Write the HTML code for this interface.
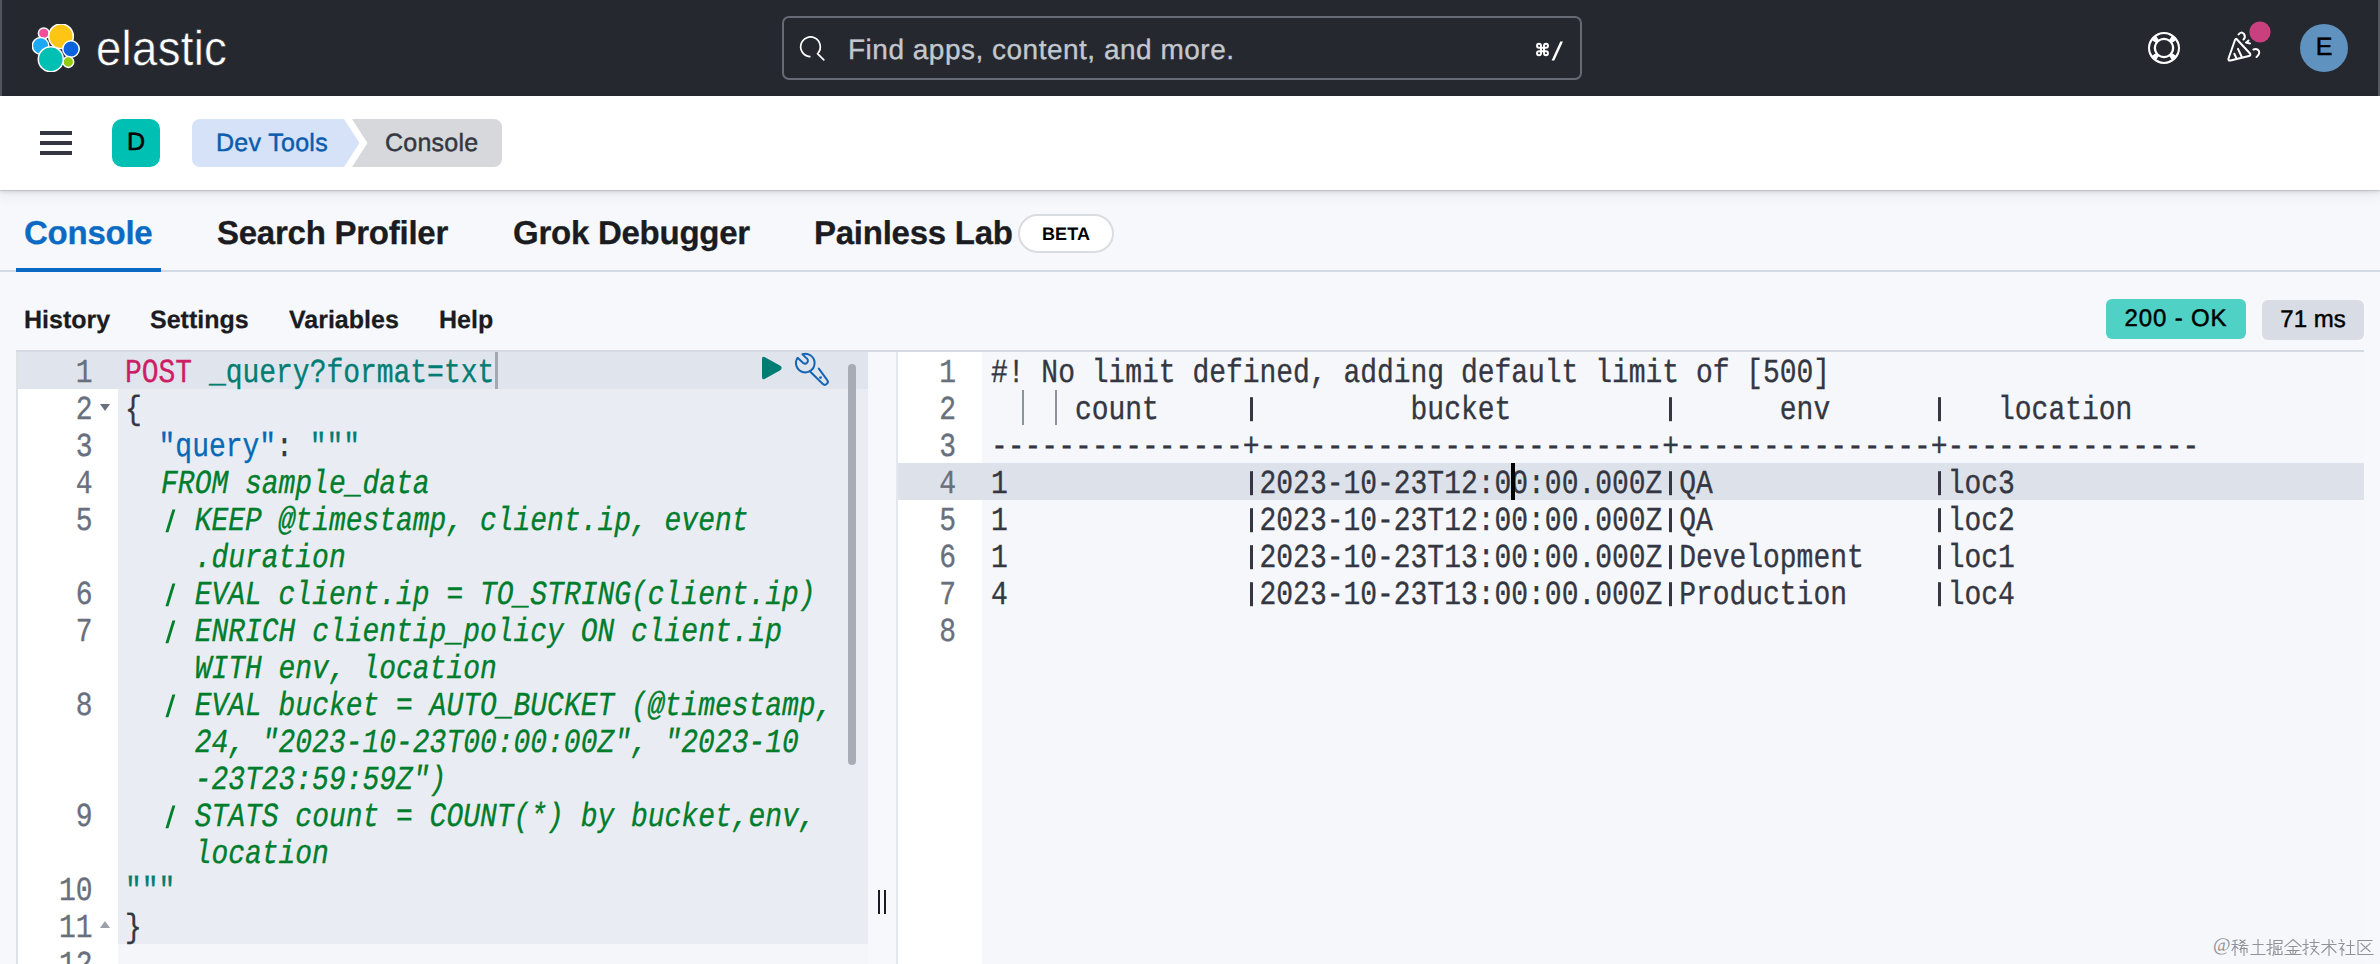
<!DOCTYPE html>
<html><head><meta charset="utf-8">
<style>
*{margin:0;padding:0;box-sizing:border-box}
html,body{text-rendering:geometricPrecision;width:2380px;height:964px;overflow:hidden;background:#f7f8fc;font-family:"Liberation Sans",sans-serif;position:relative}
.abs{position:absolute}
#hdr{left:0;top:0;width:2380px;height:96px;background:#25282f}
#bc{left:0;top:96px;width:2380px;height:94px;background:#fff;box-shadow:0 1px 1px rgba(40,40,70,.14),0 3px 3px rgba(40,40,60,.08),0 6px 12px rgba(40,40,60,.07)}
.tab{top:214px;letter-spacing:-0.25px;font-size:33px;font-weight:bold;color:#1a1c21;white-space:nowrap;-webkit-text-stroke:0.3px currentColor}
.tb{top:306px;font-size:25px;font-weight:bold;color:#1a1c21;white-space:nowrap;-webkit-text-stroke:0.25px currentColor}
.mono{font-family:"Liberation Mono",monospace;font-size:28px;white-space:pre;letter-spacing:-0.02px;-webkit-text-stroke:0.3px currentColor}
.ln{position:absolute;height:37px;line-height:37px;margin-top:4.5px;transform:scaleY(1.2);transform-origin:0 26px}
.gn{left:18px;width:74.5px;text-align:right;color:#69707d}
.rn{left:898px;width:58px;text-align:right;color:#69707d}
.lc{left:125px;color:#343741}
.rc{left:991px;color:#343741}
.m{color:#cc1d65}.u{color:#017d73}.p{color:#343741}.k{color:#0769b5}.q{color:#017d73}.g{color:#007d2c;font-style:italic;position:relative;left:2.5px}
.pp,.pi{position:relative;color:transparent}
.pp::after{content:"";position:absolute;left:7px;top:4.4px;width:3px;height:19.4px;background:#343741}
.pi::after{content:"";position:absolute;left:8px;top:4.8px;width:2.6px;height:18.5px;background:#00802b;transform:skewX(-20deg)}
</style></head><body>
<!-- HEADER -->
<div id="hdr" class="abs"></div>
<div class="abs" style="left:0;top:0;width:2px;height:96px;background:#50545c"></div>
<div class="abs" style="left:2378px;top:0;width:2px;height:96px;background:#55585f"></div>
<!-- logo -->
<svg class="abs" style="left:32px;top:24px" width="48" height="48" viewBox="32 24 48 48">
<g stroke="#fff" stroke-width="1.5">
<circle cx="43.8" cy="33.3" r="5.4" fill="#f04e98"/>
<circle cx="61" cy="36.3" r="12.3" fill="#fec514"/>
<circle cx="40.6" cy="45.8" r="8.3" fill="#1ba9f5"/>
<circle cx="71" cy="49" r="8.2" fill="#0b64dd"/>
<circle cx="68.3" cy="62" r="5.4" fill="#93c90e"/>
<circle cx="50.8" cy="59.2" r="12.5" fill="#00bfb3"/>
</g></svg>
<div class="abs" style="left:96px;top:17px;font-size:49px;color:#fff;line-height:64px;transform:scaleX(0.93);transform-origin:0 0;-webkit-text-stroke:0.5px #25282f;letter-spacing:0.3px">elastic</div>
<!-- search -->
<div class="abs" style="left:782px;top:16px;width:800px;height:64px;border:2px solid #666a73;border-radius:7px"></div>
<div class="abs" style="left:848px;top:32px;font-size:28px;color:#c3c7ce;line-height:36px;letter-spacing:0.5px;-webkit-text-stroke:0.35px currentColor">Find apps, content, and more.</div>
<svg class="abs" style="left:1530px;top:38px" width="36" height="26" viewBox="1530 38 36 26"><g fill="none" stroke="#fff" stroke-width="1.9">
<path d="M1541 47.8 H1544 V51.2 H1541 Z"/>
<path d="M1541 47.8 V45.8 A2 2 0 1 0 1539 47.8 H1541"/>
<path d="M1544 47.8 V45.8 A2 2 0 1 1 1546 47.8 H1544"/>
<path d="M1541 51.2 V53.2 A2 2 0 1 1 1539 51.2 H1541"/>
<path d="M1544 51.2 V53.2 A2 2 0 1 0 1546 51.2 H1544"/>
</g><path d="M1560.3 41.5 H1563 L1554.3 60.5 H1551.6 Z" fill="#fff"/></svg>

<svg class="abs" style="left:780px;top:14px" width="80" height="68" viewBox="780 14 80 68">
<path d="M818.0 53.1 A9.8 9.8 0 1 0 810.5 56.6" fill="none" stroke="#fff" stroke-width="1.7"/>
<path d="M817.5 53.6 L823.8 59.8" stroke="#fff" stroke-width="1.7" stroke-linecap="round"/>
</svg>
<svg class="abs" style="left:2140px;top:16px" width="140" height="60" viewBox="2140 16 140 60">
<circle cx="2164" cy="48" r="12" fill="none" stroke="#fff" stroke-width="8"/>
<g fill="none" stroke="#25282f" stroke-width="3.7">
<path d="M2157.46 37.94 A12 12 0 0 1 2170.54 37.94"/>
<path d="M2174.06 41.46 A12 12 0 0 1 2174.06 54.54"/>
<path d="M2170.54 58.06 A12 12 0 0 1 2157.46 58.06"/>
<path d="M2153.94 54.54 A12 12 0 0 1 2153.94 41.46"/>
</g>
<g fill="none" stroke="#fff" stroke-width="2" stroke-linecap="round" stroke-linejoin="round">
<path d="M2237 39.5 Q2236 38 2235 40 L2228.5 58.5 Q2228 61 2230.5 60.5 L2249 56 Q2251 55.5 2250 53.5 Z"/>
<path d="M2234.3 53.8 L2236.6 58.6 M2238 48.8 L2241.8 57"/>
<path d="M2238.5 34.5 Q2241 31 2244 34 Q2246 37 2243.5 39.5"/>
<path d="M2253.5 49.5 Q2257 48 2259 51 Q2260 54 2256.5 57"/>
<path d="M2246 42.5 L2250 43.5 M2247 42 L2248.5 40.5"/>
</g>
<circle cx="2260" cy="32" r="10.6" fill="#c9407f"/>
</svg>
<div class="abs" style="left:2300px;top:24px;width:48px;height:48px;border-radius:24px;background:#6092c0;color:#000;font-size:25px;text-align:center;line-height:46px;-webkit-text-stroke:0.5px #000">E</div>
<!-- BREADCRUMB BAR -->
<div id="bc" class="abs"></div>
<div class="abs" style="left:40px;top:131px;width:32px;height:4px;background:#343741"></div>
<div class="abs" style="left:40px;top:141px;width:32px;height:4px;background:#343741"></div>
<div class="abs" style="left:40px;top:151px;width:32px;height:4px;background:#343741"></div>
<div class="abs" style="left:112px;top:119px;width:48px;height:48px;background:#00bfb3;border-radius:10px;color:#000;font-size:25px;text-align:center;line-height:47px;-webkit-text-stroke:0.6px #000">D</div>

<svg class="abs" style="left:180px;top:105px" width="340" height="75" viewBox="180 105 340 75">
<path d="M200 119 H344 L359.5 143 L344 167 H200 A8 8 0 0 1 192 159 V127 A8 8 0 0 1 200 119 Z" fill="#d6e2f7"/>
<path d="M352 119 H494 A8 8 0 0 1 502 127 V159 A8 8 0 0 1 494 167 H352 L367.5 143 Z" fill="#d6d8dc"/>
</svg>
<div class="abs" style="left:216px;top:127px;font-size:25px;color:#0b5cad;line-height:32px;letter-spacing:0.3px;-webkit-text-stroke:0.45px currentColor">Dev Tools</div>
<div class="abs" style="left:385px;top:127px;font-size:25px;color:#343741;line-height:32px;letter-spacing:0.25px;-webkit-text-stroke:0.45px currentColor">Console</div>
<!-- TABS -->
<div class="abs tab" style="left:24px;color:#0b6bc4">Console</div>
<div class="abs tab" style="left:217px">Search Profiler</div>
<div class="abs tab" style="left:513px">Grok Debugger</div>
<div class="abs tab" style="left:814px">Painless Lab</div>
<div class="abs" style="left:0;top:270px;width:2380px;height:2px;background:#d3dae6"></div>
<div class="abs" style="left:16px;top:268px;width:145px;height:4px;background:#0b6bc4"></div>

<div class="abs" style="left:1018px;top:214px;width:96px;height:39px;border:2px solid #d9dce1;background:#fff;border-radius:20px;font-size:18px;font-weight:bold;color:#000;text-align:center;line-height:37px;letter-spacing:0.1px">BETA</div>
<!-- TOOLBAR -->
<div class="abs tb" style="left:24px">History</div>
<div class="abs tb" style="left:150px">Settings</div>
<div class="abs tb" style="left:289px">Variables</div>
<div class="abs tb" style="left:439px">Help</div>
<div class="abs" style="left:2106px;top:299px;width:140px;height:40px;background:#4fd1c5;border-radius:6px;font-size:24px;color:#000;text-align:center;line-height:39px;letter-spacing:0.85px;-webkit-text-stroke:0.45px #000">200 - OK</div>
<div class="abs" style="left:2262px;top:300px;width:102px;height:40px;background:#d8dce5;border-radius:6px;font-size:24px;color:#000;text-align:center;line-height:40px;-webkit-text-stroke:0.45px #000">71 ms</div>

<!-- EDITOR -->
<div class="abs" style="left:16px;top:350px;width:2348px;height:2px;background:#d5d9e0"></div>
<div class="abs" style="left:16px;top:352px;width:2px;height:612px;background:#dfe2e7"></div>
<div class="abs" style="left:18px;top:352px;width:100px;height:612px;background:#fff"></div>
<div class="abs" style="left:118px;top:352px;width:750px;height:612px;background:#f4f6f9"></div>
<div class="abs" style="left:118px;top:389px;width:750px;height:555px;background:#e9edf3"></div>
<div class="abs" style="left:18px;top:352px;width:850px;height:37px;background:#e0e5ed"></div>
<div class="abs" style="left:495px;top:352px;width:3px;height:37px;background:#a3a8b1"></div>
<div class="abs mono ln gn" style="top:352px">1</div>
<div class="abs mono ln gn" style="top:389px">2</div>
<div class="abs mono ln gn" style="top:426px">3</div>
<div class="abs mono ln gn" style="top:463px">4</div>
<div class="abs mono ln gn" style="top:500px">5</div>
<div class="abs mono ln gn" style="top:574px">6</div>
<div class="abs mono ln gn" style="top:611px">7</div>
<div class="abs mono ln gn" style="top:685px">8</div>
<div class="abs mono ln gn" style="top:796px">9</div>
<div class="abs mono ln gn" style="top:870px">10</div>
<div class="abs mono ln gn" style="top:907px">11</div>
<div class="abs mono ln gn" style="top:944px">12</div>
<svg class="abs" style="left:98px;top:400px" width="14" height="14"><path d="M2 4 H12 L7 11 Z" fill="#6a717d"/></svg>
<svg class="abs" style="left:98px;top:918px" width="14" height="14"><path d="M2 10 H12 L7 3 Z" fill="#9ba1aa"/></svg>
<div class="abs mono ln lc" style="top:352px"><span class="m">POST</span> <span class="u">_query?format=txt</span></div>
<div class="abs mono ln lc" style="top:389px"><span class="p">{</span></div>
<div class="abs mono ln lc" style="top:426px">  <span class="k">"query"</span><span class="p">: </span><span class="q">"""</span></div>
<div class="abs mono ln lc" style="top:463px">  <i class="g">FROM sample_data</i></div>
<div class="abs mono ln lc" style="top:500px">  <i class="g"><span class="pi">|</span> KEEP @timestamp, client.ip, event</i></div>
<div class="abs mono ln lc" style="top:537px">    <i class="g">.duration</i></div>
<div class="abs mono ln lc" style="top:574px">  <i class="g"><span class="pi">|</span> EVAL client.ip = TO_STRING(client.ip)</i></div>
<div class="abs mono ln lc" style="top:611px">  <i class="g"><span class="pi">|</span> ENRICH clientip_policy ON client.ip</i></div>
<div class="abs mono ln lc" style="top:648px">    <i class="g">WITH env, location</i></div>
<div class="abs mono ln lc" style="top:685px">  <i class="g"><span class="pi">|</span> EVAL bucket = AUTO_BUCKET (@timestamp,</i></div>
<div class="abs mono ln lc" style="top:722px">    <i class="g">24, "2023-10-23T00:00:00Z", "2023-10</i></div>
<div class="abs mono ln lc" style="top:759px">    <i class="g">-23T23:59:59Z")</i></div>
<div class="abs mono ln lc" style="top:796px">  <i class="g"><span class="pi">|</span> STATS count = COUNT(*) by bucket,env,</i></div>
<div class="abs mono ln lc" style="top:833px">    <i class="g">location</i></div>
<div class="abs mono ln lc" style="top:870px"><span class="q">"""</span></div>
<div class="abs mono ln lc" style="top:907px"><span class="p">}</span></div>
<svg class="abs" style="left:755px;top:350px" width="80" height="40" viewBox="755 350 80 40">
<path d="M765 357.3 Q762 355.6 762 359 V377 Q762 380.4 765 378.7 L780.3 370.2 Q783 368 780.3 365.8 Z" fill="#017d73"/>
<g fill="none" stroke="#1565b5" stroke-width="2" stroke-linecap="round" stroke-linejoin="round">
<path d="M797.6 357.8 A9.3 9.3 0 1 0 802.4 354.2 L806.9 358.6 A2.7 2.7 0 0 1 803.2 362.9 Z"/><path d="M809.8 371.2 L822.6 383.8 A3 3 0 0 0 826.9 379.6 L818.8 368.6"/><circle cx="820.6" cy="377.6" r="1.4" fill="#1565b5" stroke="none"/>
</g>
</svg>
<div class="abs" style="left:848px;top:364px;width:8px;height:401px;border-radius:4px;background:#a7acb5"></div>
<div class="abs" style="left:878px;top:890px;width:2px;height:24px;background:#1a1c21"></div>
<div class="abs" style="left:884px;top:890px;width:2px;height:24px;background:#1a1c21"></div>
<div class="abs" style="left:896px;top:352px;width:2px;height:612px;background:#e3e7ee"></div>
<div class="abs" style="left:898px;top:352px;width:84px;height:612px;background:#fff"></div>
<div class="abs" style="left:982px;top:352px;width:1382px;height:612px;background:#f5f7fa"></div>
<div class="abs" style="left:898px;top:463px;width:1466px;height:37px;background:#dde2ea"></div>
<div class="abs mono ln rn" style="top:352px">1</div>
<div class="abs mono ln rn" style="top:389px">2</div>
<div class="abs mono ln rn" style="top:426px">3</div>
<div class="abs mono ln rn" style="top:463px">4</div>
<div class="abs mono ln rn" style="top:500px">5</div>
<div class="abs mono ln rn" style="top:537px">6</div>
<div class="abs mono ln rn" style="top:574px">7</div>
<div class="abs mono ln rn" style="top:611px">8</div>
<div class="abs mono ln rc" style="top:352px">#! No limit defined, adding default limit of [500]</div>
<div class="abs mono ln rc" style="top:389px">     count     <span class="pp">|</span>         bucket         <span class="pp">|</span>      env      <span class="pp">|</span>   location    </div>
<div class="abs mono ln rc" style="top:426px">---------------+------------------------+---------------+---------------</div>
<div class="abs mono ln rc" style="top:463px">1              <span class="pp">|</span>2023-10-23T12:00:00.000Z<span class="pp">|</span>QA             <span class="pp">|</span>loc3           </div>
<div class="abs mono ln rc" style="top:500px">1              <span class="pp">|</span>2023-10-23T12:00:00.000Z<span class="pp">|</span>QA             <span class="pp">|</span>loc2           </div>
<div class="abs mono ln rc" style="top:537px">1              <span class="pp">|</span>2023-10-23T13:00:00.000Z<span class="pp">|</span>Development    <span class="pp">|</span>loc1           </div>
<div class="abs mono ln rc" style="top:574px">4              <span class="pp">|</span>2023-10-23T13:00:00.000Z<span class="pp">|</span>Production     <span class="pp">|</span>loc4           </div>
<div class="abs" style="left:1022px;top:390px;width:2px;height:35px;background:#8e949e"></div>
<div class="abs" style="left:1055px;top:390px;width:2px;height:35px;background:#8e949e"></div>
<div class="abs" style="left:1511px;top:463px;width:4px;height:37px;background:#000"></div>
<svg class="abs" style="left:2200px;top:925px" width="180" height="39" viewBox="2200 925 180 39"><g fill="none" stroke="#8f9196" stroke-width="1.1" stroke-linecap="square">
<path transform="translate(2232 939.5) scale(1 1)" d="M1 1.5L5 0.5M0 5H6M3 1V16M3 6L0 11M3 6.5L6 9M8 0.5L13 4M13 0.5L8 4M7 6H16M11 5L8 10M9 13V9H15V13M12 8V16"/>
<path transform="translate(2250 939.5) scale(1 1)" d="M3 5H13M8 0V15M1 15H15"/>
<path transform="translate(2267 939.5) scale(1 1)" d="M0 5H5M3 0V15L2 14M0 11L5 8M7 1H15V4H7M7 1V11L6 16M11 6V15M9 7V10H14V7M8 12V15H15V12"/>
<path transform="translate(2285 939.5) scale(1 1)" d="M8 0L0 7M8 0L16 7M4 7H12M2 11H14M8 7V15M5 12L6 14M11 12L10 14M0 15H16"/>
<path transform="translate(2303 939.5) scale(1 1)" d="M0 5H5M3 0V15L2 14M0 11L5 8M7 3H16M11 0V6M8 7H14L8 15M9 9L16 15"/>
<path transform="translate(2321 939.5) scale(1 1)" d="M1 5H15M8 0V16M8 6L1 13M8 6L15 13M11 1L12 3"/>
<path transform="translate(2339 939.5) scale(1 1)" d="M2 0L3 2M0 4H5L1 10M3 7V16M3 9L5 11M8 6H15M11.5 1V15M7 15H16"/>
<path transform="translate(2357 939.5) scale(1 1)" d="M15 1H1V15H16M4 4L13 12M13 4L4 12"/>
</g></svg>
<div class="abs" style="left:2213px;top:935px;font-family:'Liberation Serif',serif;font-size:19px;color:#8f9196;line-height:22px">@</div>
</body></html>
